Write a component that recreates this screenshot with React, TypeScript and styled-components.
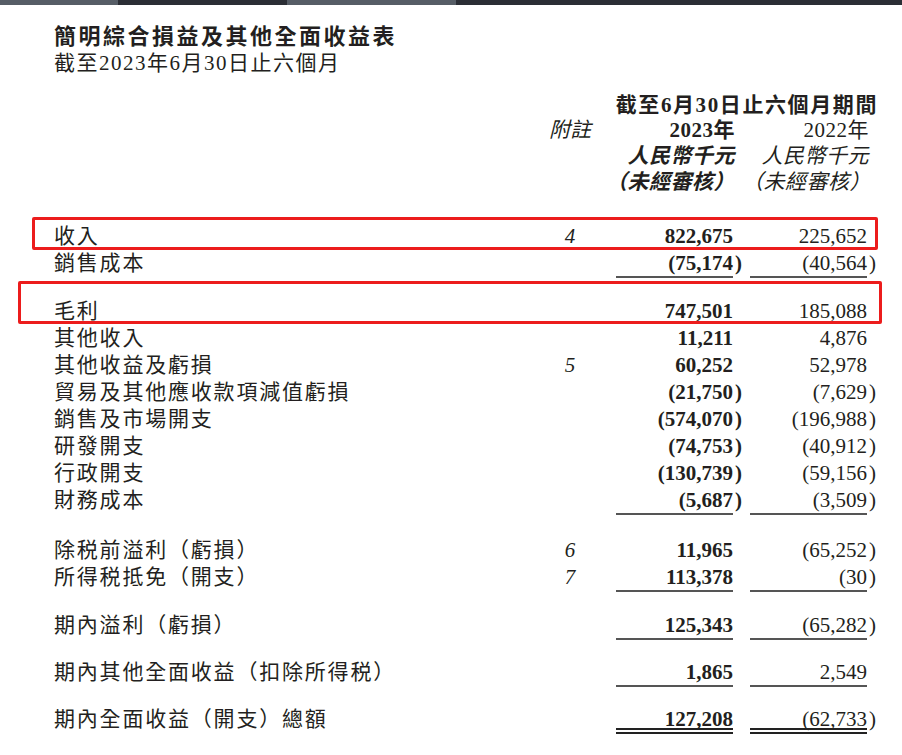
import React from "react";
import styled, { createGlobalStyle } from "styled-components";

const Global = createGlobalStyle`
  html, body { margin: 0; background: #fff; }
  body { font-family: "Liberation Serif", "Noto Sans CJK TC", serif; color: #231f20; }
`;

const Page = styled.div`
  position: relative;
  width: 902px;
  height: 755px;
  overflow: hidden;
`;
const TopBar = styled.div`
  display: grid;
  grid-template-columns: 118px 169px 169px 1fr;
  height: 5px;
  & > div:nth-child(odd) { background: #565d66; }
  & > div:nth-child(even) { background: #2b2e35; }
`;
const Body = styled.div`
  padding: 15px 26px 0 54px;
`;
const Title = styled.div`
  font-family: "Noto Sans CJK TC", sans-serif;
  font-weight: 700;
  font-size: 22px;
  line-height: 28px;
  letter-spacing: 2.5px;
`;
const Sub = styled.div`
  font-size: 21px;
  line-height: 26px;
  margin-top: 2px;
  letter-spacing: 1.5px;
`;
const Grid = styled.div`
  display: grid;
  grid-template-columns: 1fr 60px 142px 134px;
`;
const Row = styled.div<{ $top?: number; $h?: number }>`
  display: contents;
  & > div { margin-top: ${(p) => p.$top ?? 0}px; height: ${(p) => p.$h ?? 27}px; line-height: ${(p) => (p.$h ?? 27) - 3}px; }
`;
const Label = styled.div`
  font-size: 21px;
  letter-spacing: 1.8px;
  white-space: nowrap;
`;
const Note = styled.div`
  text-align: center;
  font-style: italic;
  font-size: 21px;
`;
const HeadSpan = styled.div`
  grid-column: 3 / 5;
  text-align: right;
  font-weight: 700;
  font-size: 21px;
  letter-spacing: 1.6px;
  white-space: nowrap;
  height: 27px;
  line-height: 27px;
  margin-right: -2px;
`;
const Head = styled.div<{ $bold?: boolean; $italic?: boolean }>`
  text-align: right;
  padding-right: 7px;
  font-size: 21px;
  letter-spacing: 0.5px;
  font-weight: ${(p) => (p.$bold ? 700 : 400)};
  font-style: ${(p) => (p.$italic ? "italic" : "normal")};
  white-space: nowrap;
`;
const Num = styled.div<{ $bold?: boolean }>`
  display: flex;
  justify-content: flex-end;
  padding-right: 9px;
  font-size: 21px;
  font-weight: ${(p) => (p.$bold ? 700 : 400)};
`;
const Cell = styled.span<{ $line?: "single" | "double" }>`
  position: relative;
  display: block;
  width: 117px;
  text-align: right;
  height: 100%;
  border-bottom: ${(p) =>
    p.$line === "single" ? "2px solid #555" : p.$line === "double" ? "6px double #222" : "none"};
  box-sizing: border-box;
`;
const Paren = styled.span`
  position: absolute;
  right: -9px;
`;
const Box = styled.div<{ $l: number; $t: number; $w: number; $h: number }>`
  position: absolute;
  left: ${(p) => p.$l}px;
  top: ${(p) => p.$t}px;
  width: ${(p) => p.$w}px;
  height: ${(p) => p.$h}px;
  border: 3px solid #ec1c1c;
  box-sizing: border-box;
  border-radius: 2px;
`;

type R = { label: string; note?: string; a: string; b: string; top?: number; line?: "single" | "double" };

const rows: R[] = [
  { label: "收入", note: "4", a: "822,675", b: "225,652", top: 27 },
  { label: "銷售成本", a: "(75,174)", b: "(40,564)", line: "single" },
  { label: "毛利", a: "747,501", b: "185,088", top: 21 },
  { label: "其他收入", a: "11,211", b: "4,876" },
  { label: "其他收益及虧損", note: "5", a: "60,252", b: "52,978" },
  { label: "貿易及其他應收款項減值虧損", a: "(21,750)", b: "(7,629)" },
  { label: "銷售及市場開支", a: "(574,070)", b: "(196,988)" },
  { label: "研發開支", a: "(74,753)", b: "(40,912)" },
  { label: "行政開支", a: "(130,739)", b: "(59,156)" },
  { label: "財務成本", a: "(5,687)", b: "(3,509)", line: "single" },
  { label: "除税前溢利（虧損）", note: "6", a: "11,965", b: "(65,252)", top: 23 },
  { label: "所得税抵免（開支）", note: "7", a: "113,378", b: "(30)", line: "single" },
  { label: "期內溢利（虧損）", a: "125,343", b: "(65,282)", top: 21, line: "single" },
  { label: "期內其他全面收益（扣除所得税）", a: "1,865", b: "2,549", top: 20, line: "single" },
  { label: "期內全面收益（開支）總額", a: "127,208", b: "(62,733)", top: 20, line: "double" },
];

const Value = ({ v, line }: { v: string; line?: "single" | "double" }) => {
  const neg = v.endsWith(")");
  return (
    <Cell $line={line}>
      {neg ? v.slice(0, -1) : v}
      {neg && <Paren>)</Paren>}
    </Cell>
  );
};

export default function App() {
  return (
    <Page>
      <Global />
      <TopBar><div /><div /><div /><div /></TopBar>
      <Body>
        <Title>簡明綜合損益及其他全面收益表</Title>
        <Sub>截至2023年6月30日止六個月</Sub>
        <Grid>
          <div style={{ gridColumn: "1 / 3", marginTop: 16 }} />
          <HeadSpan style={{ marginTop: 16 }}>截至6月30日止六個月期間</HeadSpan>
          <Row $h={26}>
            <Label />
            <Note>附註</Note>
            <Head $bold>2023年</Head>
            <Head>2022年</Head>
          </Row>
          <Row $h={26}>
            <Label />
            <Note />
            <Head $bold $italic>人民幣千元</Head>
            <Head $italic>人民幣千元</Head>
          </Row>
          <Row $h={26}>
            <Label />
            <Note />
            <Head $bold $italic>（未經審核）</Head>
            <Head $italic>（未經審核）</Head>
          </Row>
          {rows.map((r, i) => (
            <Row key={i} $top={r.top}>
              <Label>{r.label}</Label>
              <Note>{r.note}</Note>
              <Num $bold><Value v={r.a} line={r.line} /></Num>
              <Num><Value v={r.b} line={r.line} /></Num>
            </Row>
          ))}
        </Grid>
      </Body>
      <Box $l={32} $t={217} $w={846} $h={33} />
      <Box $l={18} $t={281} $w={864} $h={43} />
    </Page>
  );
}
